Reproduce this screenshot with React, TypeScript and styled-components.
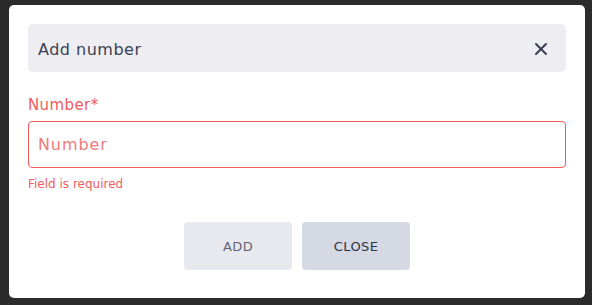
import React from "react";
import styled, { createGlobalStyle } from "styled-components";

const GlobalStyle = createGlobalStyle`
  html, body {
    margin: 0;
    padding: 0;
    background: #2b2b2b;
    font-family: "DejaVu Sans", "Noto Sans", sans-serif;
  }
  * { box-sizing: border-box; }
`;

const Backdrop = styled.div`
  width: 592px;
  height: 305px;
  padding: 5px 0 0 9px;
`;

const Modal = styled.div`
  width: 576px;
  height: 293px;
  background: #ffffff;
  border-radius: 5px;
  padding: 19px 19px 28px;
  display: flex;
  flex-direction: column;
`;

const Header = styled.div`
  height: 48px;
  background: #eeeef2;
  border-radius: 5px;
  display: flex;
  align-items: center;
  justify-content: space-between;
  padding: 2px 18px 0 10px;
`;

const Title = styled.h2`
  margin: 0;
  font-size: 16px;
  font-weight: 400;
  letter-spacing: 0.5px;
  color: #3a3e54;
`;

const CloseIcon = styled.button`
  border: 0;
  background: transparent;
  padding: 0;
  width: 14px;
  height: 14px;
  display: flex;
  cursor: pointer;
`;

const Field = styled.div`
  margin-top: 22px;
  display: flex;
  flex-direction: column;
`;

const Label = styled.label`
  font-size: 15px;
  line-height: 22px;
  letter-spacing: 0.4px;
  color: #f05b5b;
  margin-bottom: 5px;
`;

const Input = styled.input`
  height: 47px;
  width: 100%;
  border: 1px solid #f05b5b;
  border-radius: 4px;
  padding: 0 9px;
  font-family: inherit;
  font-size: 16px;
  letter-spacing: 0.9px;
  color: #3a3e54;
  outline: none;
  &::placeholder { color: #f07a7a; }
`;

const ErrorText = styled.span`
  margin-top: 9px;
  font-size: 12px;
  line-height: 15px;
  color: #f06060;
`;

const Actions = styled.div`
  margin-top: auto;
  display: flex;
  justify-content: center;
  gap: 10px;
`;

const Button = styled.button<{ $tone: "light" | "dark" }>`
  width: 108px;
  height: 48px;
  border: 0;
  border-radius: 4px;
  font-family: inherit;
  font-size: 13px;
  font-weight: 400;
  letter-spacing: 0.4px;
  text-transform: uppercase;
  background: ${(p) => (p.$tone === "light" ? "#e8e9ee" : "#d5d9e3")};
  color: ${(p) => (p.$tone === "light" ? "#5f6479" : "#2f3346")};
  cursor: pointer;
`;

export default function App() {
  return (
    <>
      <GlobalStyle />
      <Backdrop>
        <Modal>
          <Header>
            <Title>Add number</Title>
            <CloseIcon aria-label="close">
              <svg width="14" height="14" viewBox="0 0 14 14">
                <path d="M2 2 L12 12 M12 2 L2 12" stroke="#3a3e54" strokeWidth="2" strokeLinecap="round" />
              </svg>
            </CloseIcon>
          </Header>
          <Field>
            <Label>Number*</Label>
            <Input placeholder="Number" />
            <ErrorText>Field is required</ErrorText>
          </Field>
          <Actions>
            <Button $tone="light">Add</Button>
            <Button $tone="dark">Close</Button>
          </Actions>
        </Modal>
      </Backdrop>
    </>
  );
}
